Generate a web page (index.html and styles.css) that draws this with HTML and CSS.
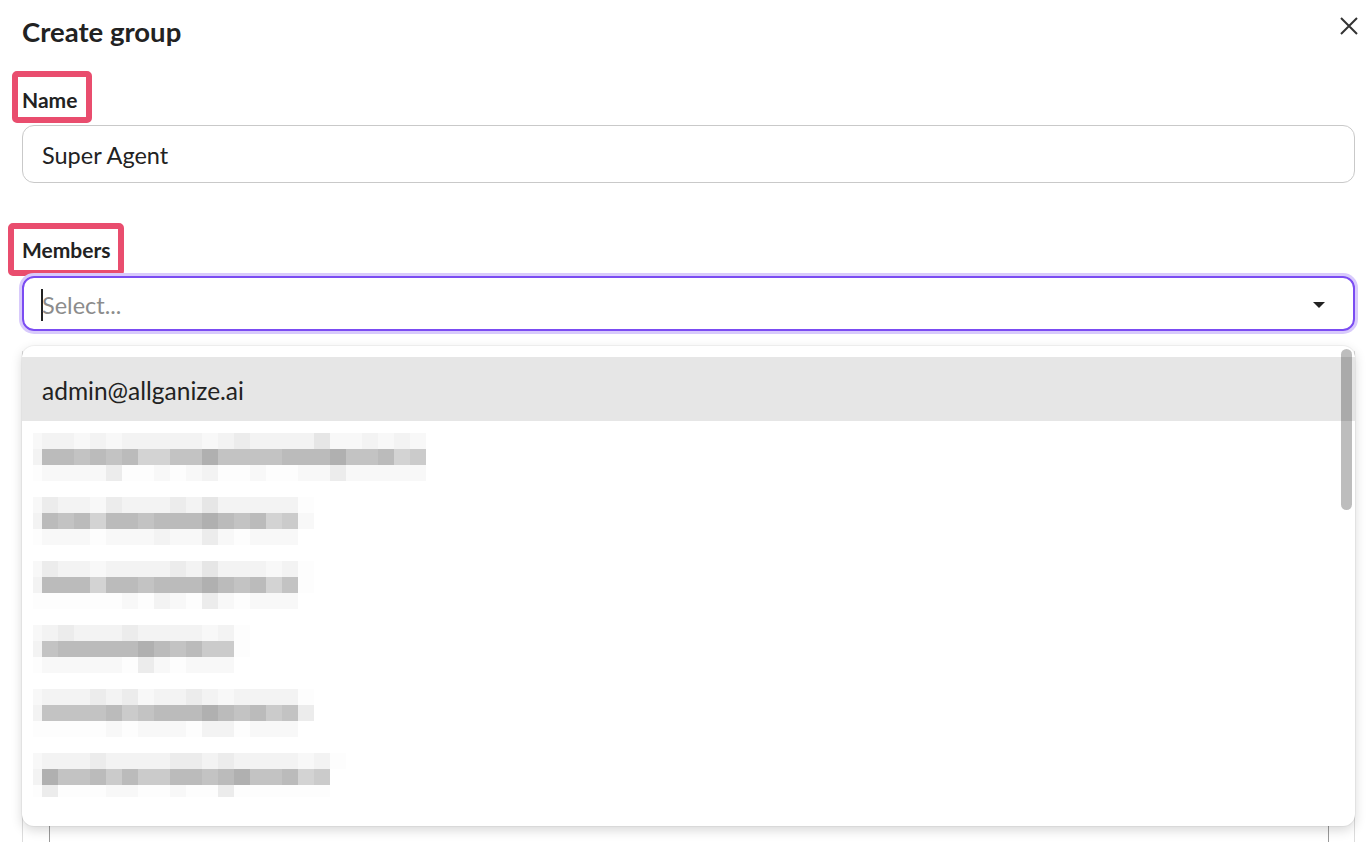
FILE: index.html
```html
<!DOCTYPE html>
<html lang="en">
<head>
<meta charset="utf-8">
<title>Create group</title>
<link rel="stylesheet" href="styles.css">
</head>
<body>
<div class="dialog">
  <header class="head">
    <h1 class="title">Create group</h1>
    <button class="close" aria-label="Close">
      <svg width="18" height="18" viewBox="0 0 18 18"><path d="M1 1L17 17M17 1L1 17" stroke="#333" stroke-width="2" fill="none"/></svg>
    </button>
  </header>

  <label class="label label-name">Name<span class="mark mark-name"></span></label>
  <div class="input">Super Agent</div>

  <label class="label label-members">Members<span class="mark mark-members"></span></label>
  <div class="select-wrap">
    <div class="select">
      <span class="caret"></span><span class="placeholder">Select...</span>
      <svg class="arrow" width="12" height="6" viewBox="0 0 12 6"><path d="M0 0H12L6 6Z" fill="#222"/></svg>
    </div>
    <div class="menu">
      <div class="opt active">admin@allganize.ai</div>

      <div class="opt blur"><div class="mz">
        <div class="band"><i class="p s1"></i><i class="s2"></i><i class="s2"></i><i class="s1"></i><i class="s2"></i><i class="s1"></i><i class="s2"></i><i class="s2"></i><i class="s2"></i><i class="s2"></i><i class="s2"></i><i class="s1"></i><i class="s2"></i><i class="s3"></i><i class="s2"></i><i class="s2"></i><i class="s2"></i><i class="s2"></i><i class="s4"></i><i class="s1"></i><i class="s1"></i><i class="s2"></i><i class="s1"></i><i class="s2"></i><i class="s1"></i></div>
        <div class="band"><i class="p s2"></i><i class="s8"></i><i class="s8"></i><i class="s7"></i><i class="s8"></i><i class="s7"></i><i class="s8"></i><i class="s5"></i><i class="s5"></i><i class="s7"></i><i class="s7"></i><i class="s9"></i><i class="s7"></i><i class="s7"></i><i class="s7"></i><i class="s7"></i><i class="s8"></i><i class="s8"></i><i class="s8"></i><i class="s9"></i><i class="s7"></i><i class="s7"></i><i class="s8"></i><i class="s5"></i><i class="s6"></i></div>
        <div class="band"><i class="p s0"></i><i class="s1"></i><i class="s1"></i><i class="s1"></i><i class="s1"></i><i class="s3"></i><i class="s0"></i><i class="s0"></i><i class="s1"></i><i class="s0"></i><i class="s1"></i><i class="s2"></i><i class="s0"></i><i class="s0"></i><i class="s1"></i><i class="s0"></i><i class="s0"></i><i class="s1"></i><i class="s1"></i><i class="s3"></i><i class="s1"></i><i class="s1"></i><i class="s1"></i><i class="s1"></i><i class="s1"></i></div>
      </div></div>

      <div class="opt blur"><div class="mz">
        <div class="band"><i class="p s1"></i><i class="s3"></i><i class="s2"></i><i class="s2"></i><i class="s1"></i><i class="s3"></i><i class="s2"></i><i class="s2"></i><i class="s2"></i><i class="s3"></i><i class="s2"></i><i class="s4"></i><i class="s2"></i><i class="s2"></i><i class="s2"></i><i class="s2"></i><i class="s2"></i><i class="s0"></i></div>
        <div class="band"><i class="p s2"></i><i class="s8"></i><i class="s7"></i><i class="s8"></i><i class="s5"></i><i class="s8"></i><i class="s8"></i><i class="s7"></i><i class="s8"></i><i class="s8"></i><i class="s8"></i><i class="s9"></i><i class="s8"></i><i class="s7"></i><i class="s8"></i><i class="s5"></i><i class="s6"></i><i class="s1"></i></div>
        <div class="band"><i class="p s0"></i><i class="s1"></i><i class="s1"></i><i class="s1"></i><i class="s0"></i><i class="s1"></i><i class="s1"></i><i class="s1"></i><i class="s2"></i><i class="s1"></i><i class="s1"></i><i class="s3"></i><i class="s1"></i><i class="s0"></i><i class="s1"></i><i class="s1"></i><i class="s1"></i></div>
      </div></div>

      <div class="opt blur"><div class="mz">
        <div class="band"><i class="p s1"></i><i class="s3"></i><i class="s2"></i><i class="s2"></i><i class="s1"></i><i class="s2"></i><i class="s2"></i><i class="s2"></i><i class="s2"></i><i class="s3"></i><i class="s2"></i><i class="s4"></i><i class="s2"></i><i class="s2"></i><i class="s2"></i><i class="s1"></i><i class="s2"></i><i class="s0"></i></div>
        <div class="band"><i class="p s2"></i><i class="s8"></i><i class="s8"></i><i class="s8"></i><i class="s5"></i><i class="s8"></i><i class="s8"></i><i class="s7"></i><i class="s8"></i><i class="s8"></i><i class="s8"></i><i class="s9"></i><i class="s8"></i><i class="s7"></i><i class="s8"></i><i class="s5"></i><i class="s7"></i><i class="s0"></i></div>
        <div class="band"><i class="p s0"></i><i class="s0"></i><i class="s0"></i><i class="s0"></i><i class="s0"></i><i class="s0"></i><i class="s1"></i><i class="s0"></i><i class="s2"></i><i class="s1"></i><i class="s0"></i><i class="s3"></i><i class="s1"></i><i class="s0"></i><i class="s1"></i><i class="s1"></i><i class="s1"></i></div>
      </div></div>

      <div class="opt blur"><div class="mz">
        <div class="band"><i class="p s1"></i><i class="s2"></i><i class="s3"></i><i class="s2"></i><i class="s2"></i><i class="s2"></i><i class="s3"></i><i class="s2"></i><i class="s2"></i><i class="s2"></i><i class="s2"></i><i class="s1"></i><i class="s2"></i><i class="s0"></i></div>
        <div class="band"><i class="p s2"></i><i class="s7"></i><i class="s8"></i><i class="s8"></i><i class="s8"></i><i class="s8"></i><i class="s8"></i><i class="s9"></i><i class="s8"></i><i class="s7"></i><i class="s8"></i><i class="s6"></i><i class="s6"></i><i class="s0"></i></div>
        <div class="band"><i class="p s0"></i><i class="s1"></i><i class="s1"></i><i class="s1"></i><i class="s1"></i><i class="s1"></i><i class="s0"></i><i class="s3"></i><i class="s1"></i><i class="s0"></i><i class="s1"></i><i class="s1"></i><i class="s1"></i></div>
      </div></div>

      <div class="opt blur"><div class="mz">
        <div class="band"><i class="p s1"></i><i class="s2"></i><i class="s2"></i><i class="s2"></i><i class="s3"></i><i class="s2"></i><i class="s3"></i><i class="s1"></i><i class="s2"></i><i class="s2"></i><i class="s3"></i><i class="s2"></i><i class="s1"></i><i class="s2"></i><i class="s2"></i><i class="s2"></i><i class="s2"></i><i class="s0"></i></div>
        <div class="band"><i class="p s2"></i><i class="s7"></i><i class="s7"></i><i class="s7"></i><i class="s7"></i><i class="s8"></i><i class="s6"></i><i class="s7"></i><i class="s8"></i><i class="s8"></i><i class="s8"></i><i class="s9"></i><i class="s8"></i><i class="s7"></i><i class="s8"></i><i class="s6"></i><i class="s7"></i><i class="s3"></i></div>
        <div class="band"><i class="p s0"></i><i class="s0"></i><i class="s0"></i><i class="s0"></i><i class="s0"></i><i class="s1"></i><i class="s0"></i><i class="s1"></i><i class="s1"></i><i class="s1"></i><i class="s0"></i><i class="s2"></i><i class="s2"></i><i class="s0"></i><i class="s1"></i><i class="s1"></i><i class="s1"></i></div>
      </div></div>

      <div class="opt blur"><div class="mz">
        <div class="band"><i class="p s1"></i><i class="s2"></i><i class="s2"></i><i class="s2"></i><i class="s3"></i><i class="s2"></i><i class="s2"></i><i class="s2"></i><i class="s2"></i><i class="s3"></i><i class="s3"></i><i class="s2"></i><i class="s3"></i><i class="s2"></i><i class="s2"></i><i class="s2"></i><i class="s2"></i><i class="s1"></i><i class="s2"></i><i class="s0"></i></div>
        <div class="band"><i class="p s2"></i><i class="s9"></i><i class="s7"></i><i class="s7"></i><i class="s8"></i><i class="s6"></i><i class="s8"></i><i class="s6"></i><i class="s6"></i><i class="s8"></i><i class="s8"></i><i class="s7"></i><i class="s8"></i><i class="s9"></i><i class="s7"></i><i class="s7"></i><i class="s8"></i><i class="s5"></i><i class="s6"></i></div>
        <div class="band short"><i class="p s0"></i><i class="s3"></i><i class="s0"></i><i class="s0"></i><i class="s0"></i><i class="s1"></i><i class="s1"></i><i class="s0"></i><i class="s0"></i><i class="s1"></i><i class="s0"></i><i class="s0"></i><i class="s3"></i><i class="s0"></i><i class="s0"></i><i class="s0"></i><i class="s0"></i><i class="s0"></i><i class="s0"></i></div>
      </div></div>

      <span class="scroll-thumb"></span>
    </div>
  </div>

  <div class="list"><div class="list-inner"></div></div>
</div>
</body>
</html>
```

FILE: styles.css
```css
html, body {
  margin: 0;
  padding: 0;
  overflow: hidden;
  background: #fff;
}

body {
  font-family: Lato, "Noto Sans", sans-serif;
  color: #222;
}

.dialog {
  padding: 14px 13px 0 22px;
  display: flex;
  flex-direction: column;
  align-items: flex-start;
}

.head {
  align-self: stretch;
  display: flex;
  justify-content: space-between;
  align-items: flex-start;
  height: 36px;
}

.title {
  margin: 0;
  font-size: 27.5px;
  line-height: 36px;
  font-weight: 700;
}

.close {
  border: 0;
  background: none;
  padding: 0;
  margin: 3px -3px 0 0;
  width: 18px;
  height: 18px;
  display: block;
  cursor: pointer;
}

.close svg {
  display: block;
}

.label {
  position: relative;
  display: inline-block;
  font-size: 21px;
  line-height: 24px;
  font-weight: 700;
}

.label-name {
  margin-top: 38px;
}

.label-members {
  margin-top: 55px;
}

.mark {
  position: absolute;
  border: 6px solid #e94d6e;
  border-radius: 5px;
  pointer-events: none;
}

.mark-name {
  left: -10px;
  top: -17px;
  right: -15px;
  bottom: -11px;
}

.mark-members {
  left: -14px;
  top: -15px;
  right: -14px;
  bottom: -14px;
}

.input {
  align-self: stretch;
  margin-top: 13px;
  box-sizing: border-box;
  height: 58px;
  border: 1px solid #c9c9c9;
  border-radius: 12px;
  padding: 2px 19px 0;
  display: flex;
  align-items: center;
  font-size: 23.5px;
}

.select-wrap {
  align-self: stretch;
  position: relative;
  margin-top: 14px;
}

.select {
  box-sizing: border-box;
  height: 55px;
  border: 2px solid #7b4cf2;
  box-shadow: 0 0 0 3px #d8cafc;
  border-radius: 12px;
  padding: 2px 28px 0 17px;
  display: flex;
  align-items: center;
  font-size: 23.5px;
}

.caret {
  display: block;
  width: 2px;
  height: 32px;
  background: #222;
  margin-right: -1px;
}

.placeholder {
  color: #8c8c8c;
  flex: 1;
}

.arrow {
  display: block;
}

.menu {
  position: absolute;
  top: calc(100% + 15px);
  left: 0;
  right: 0;
  height: 480px;
  box-sizing: border-box;
  padding-top: 11px;
  background: #fff;
  border-radius: 12px;
  box-shadow: 0 0 0 1px rgba(0, 0, 0, 0.04), 0 4px 12px rgba(0, 0, 0, 0.16);
  overflow: hidden;
  z-index: 2;
}

.opt {
  height: 64px;
  box-sizing: border-box;
  display: flex;
  align-items: center;
  padding-left: 20px;
  font-size: 24.5px;
  padding-top: 2px;
}

.opt.active {
  background: #e6e6e6;
}

.opt.blur {
  align-items: flex-start;
  padding: 12px 0 0 11px;
}

.mz {
  display: flex;
  flex-direction: column;
}

.band {
  display: flex;
  height: 16px;
}

.band.short {
  height: 12px;
}

.band i {
  display: block;
  width: 16px;
  height: 100%;
}

.band i.p {
  width: 9px;
}

.s0 { background: #fdfdfd; }
.s1 { background: #f8f8f8; }
.s2 { background: #f3f3f3; }
.s3 { background: #ececec; }
.s4 { background: #e6e6e6; }
.s5 { background: #d3d3d3; }
.s6 { background: #cbcbcb; }
.s7 { background: #c3c3c3; }
.s8 { background: #bbbbbb; }
.s9 { background: #b0b0b0; }

.scroll-thumb {
  position: absolute;
  right: 3px;
  top: 3px;
  width: 11px;
  height: 161px;
  border-radius: 6px;
  background: rgba(0, 0, 0, 0.26);
}

.list {
  align-self: stretch;
  margin-top: 20px;
  height: 700px;
  border-left: 1px solid #dcdcdc;
  border-right: 1px solid #dcdcdc;
  padding: 0 25px 0 26px;
}

.list-inner {
  height: 100%;
  border-left: 1px solid #9a9a9a;
  border-right: 1px solid #9a9a9a;
}
```
